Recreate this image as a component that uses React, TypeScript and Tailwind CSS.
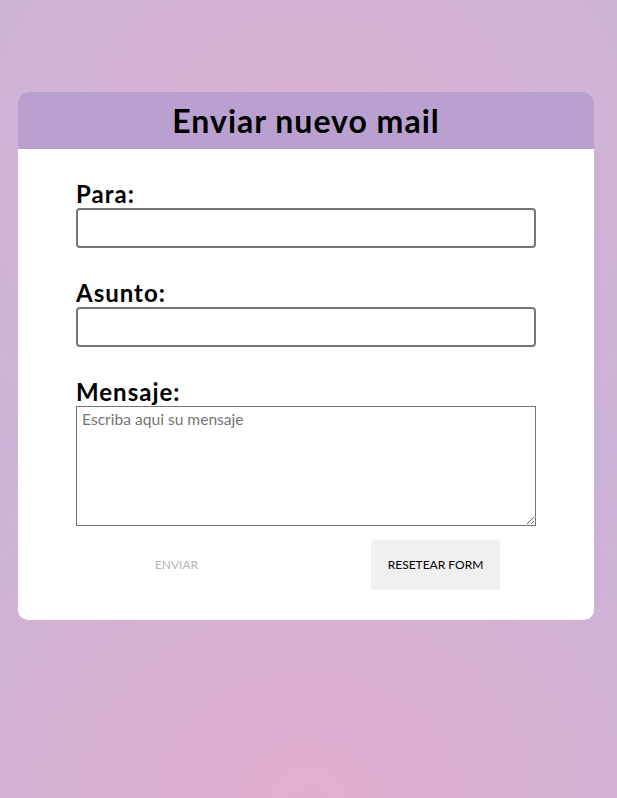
export default function App() {
  return (
    <div className="min-h-screen w-full bg-[#c8b4d8] bg-[radial-gradient(ellipse_85%_55%_at_50%_100%,#e2aecf_0%,rgba(200,180,216,0)_100%),radial-gradient(ellipse_85%_60%_at_50%_20%,#dab0d2_0%,rgba(200,180,216,0)_100%)] pt-[92px] px-[18px] font-['Trebuchet_MS','Lato',sans-serif]">
      <div className="w-[576px] rounded-[10px] bg-white overflow-hidden">
        <div className="h-[57px] bg-[#b9a0cf] flex items-center justify-center">
          <h1 className="text-[32px] font-bold text-black leading-none tracking-[1px]">Enviar nuevo mail</h1>
        </div>
        <form className="px-[58px] pt-[31px] pb-[30px] flex flex-col">
          <label className="text-[24px] font-bold leading-[28px] tracking-[1px] text-black">Para:</label>
          <input type="text" className="h-[40px] w-full rounded-[4px] border-2 border-[#767676] bg-white" />

          <label className="mt-[31px] text-[24px] font-bold leading-[28px] tracking-[1px] text-black">Asunto:</label>
          <input type="text" className="h-[40px] w-full rounded-[4px] border-2 border-[#767676] bg-white" />

          <label className="mt-[31px] text-[24px] font-bold leading-[28px] tracking-[1px] text-black">Mensaje:</label>
          <textarea
            placeholder="Escriba aqui su mensaje"
            className="h-[120px] w-full border border-[#767676] px-[5px] py-[2px] text-[15.6px] leading-[20px] font-['Trebuchet_MS','Lato',sans-serif] placeholder:text-[#757575]"
          />

          <div className="mt-[14px] flex justify-center gap-[130px]">
            <button type="button" disabled className="h-[50px] w-[129px] rounded-[4px] text-[12px] text-[#b3b3b3]">
              ENVIAR
            </button>
            <button type="reset" className="h-[50px] w-[129px] rounded-[4px] bg-[#f0f0f0] text-[12px] text-black">
              RESETEAR FORM
            </button>
          </div>
        </form>
      </div>
    </div>
  );
}
